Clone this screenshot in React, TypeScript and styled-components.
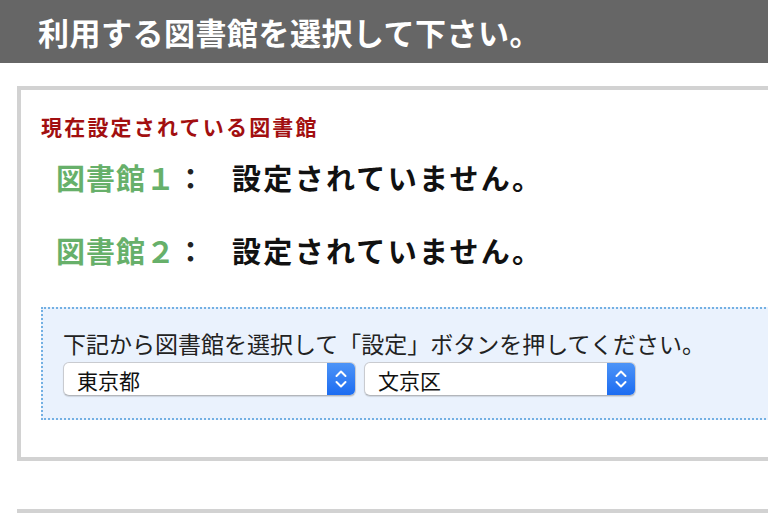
import React from "react";
import styled, { createGlobalStyle } from "styled-components";

const GlobalStyle = createGlobalStyle`
  html, body {
    margin: 0;
    padding: 0;
    background: #fff;
    overflow: hidden;
  }
  body {
    font-family: "Noto Sans CJK JP", "Noto Sans", sans-serif;
  }
`;

const Header = styled.div`
  height: 63px;
  background: #666;
  color: #fff;
  font-size: 31px;
  font-weight: bold;
  line-height: 63px;
  padding-left: 38px;
  letter-spacing: 0.5px;
  white-space: nowrap;
`;

const Panel = styled.div`
  margin: 23px 0 0 17px;
  width: 820px;
  border: 4px solid #d2d2d2;
  padding: 22px 0 37px 20px;
`;

const NextPanel = styled.div`
  margin: 48px 0 0 17px;
  width: 820px;
  border-top: 4px solid #d2d2d2;
`;

const Caption = styled.div`
  color: #a20f10;
  font-size: 21px;
  font-weight: bold;
  letter-spacing: 2.2px;
  line-height: 28px;
`;

const LibRow = styled.div<{ $first?: boolean }>`
  display: flex;
  align-items: center;
  margin: ${(p) => (p.$first ? "16px" : "31px")} 0 0 15px;
  font-size: 29px;
  font-weight: bold;
  line-height: 42px;
  white-space: nowrap;
`;

const LibName = styled.span`
  color: #67b06a;
  letter-spacing: 1px;
`;

const Colon = styled.span`
  color: #222;
  margin-right: 27px;
`;

const LibValue = styled.span`
  color: #111;
  letter-spacing: 2.3px;
`;

const ChooseBox = styled.div`
  margin-top: 36px;
  background: #eaf2fd;
  border: 2px dotted #73b0e3;
  border-right: none;
  padding: 19px 0 22px 20px;
`;

const Hint = styled.div`
  font-size: 23px;
  color: #222;
  line-height: 30px;
  white-space: nowrap;
`;

const Selects = styled.div`
  display: flex;
  gap: 8px;
  margin-top: 4px;
`;

const SelectBox = styled.div<{ $w: number }>`
  width: ${(p) => p.$w}px;
  height: 34px;
  box-sizing: border-box;
  display: flex;
  align-items: stretch;
  background: #fff;
  border: 1px solid #c9cbd0;
  border-bottom-color: #b3b6bb;
  border-radius: 6px;
  box-shadow: 0 1px 1px rgba(0, 0, 0, 0.12);
  overflow: hidden;
`;

const SelectText = styled.span`
  flex: 1;
  padding-left: 13px;
  font-size: 21px;
  line-height: 34px;
  color: #111;
`;

const SelectArrow = styled.span`
  width: 28px;
  display: flex;
  align-items: center;
  justify-content: center;
  background: linear-gradient(#4d94f7, #1c6cf1);
`;

const Chevrons = () => (
  <svg width="14" height="22" viewBox="0 0 14 22">
    <path d="M2.5 8 L7 3.5 L11.5 8" fill="none" stroke="#fff" strokeWidth="2" strokeLinecap="round" strokeLinejoin="round" />
    <path d="M2.5 14 L7 18.5 L11.5 14" fill="none" stroke="#fff" strokeWidth="2" strokeLinecap="round" strokeLinejoin="round" />
  </svg>
);

const Select = ({ value, width }: { value: string; width: number }) => (
  <SelectBox $w={width}>
    <SelectText>{value}</SelectText>
    <SelectArrow>
      <Chevrons />
    </SelectArrow>
  </SelectBox>
);

const App = () => {
  return (
    <>
      <GlobalStyle />
      <Header>利用する図書館を選択して下さい。</Header>
      <Panel>
        <Caption>現在設定されている図書館</Caption>
        <LibRow $first>
          <LibName>図書館１</LibName>
          <Colon>：</Colon>
          <LibValue>設定されていません。</LibValue>
        </LibRow>
        <LibRow>
          <LibName>図書館２</LibName>
          <Colon>：</Colon>
          <LibValue>設定されていません。</LibValue>
        </LibRow>
        <ChooseBox>
          <Hint>下記から図書館を選択して「設定」ボタンを押してください。</Hint>
          <Selects>
            <Select value="東京都" width={293} />
            <Select value="文京区" width={272} />
          </Selects>
        </ChooseBox>
      </Panel>
      <NextPanel />
    </>
  );
};

export default App;
